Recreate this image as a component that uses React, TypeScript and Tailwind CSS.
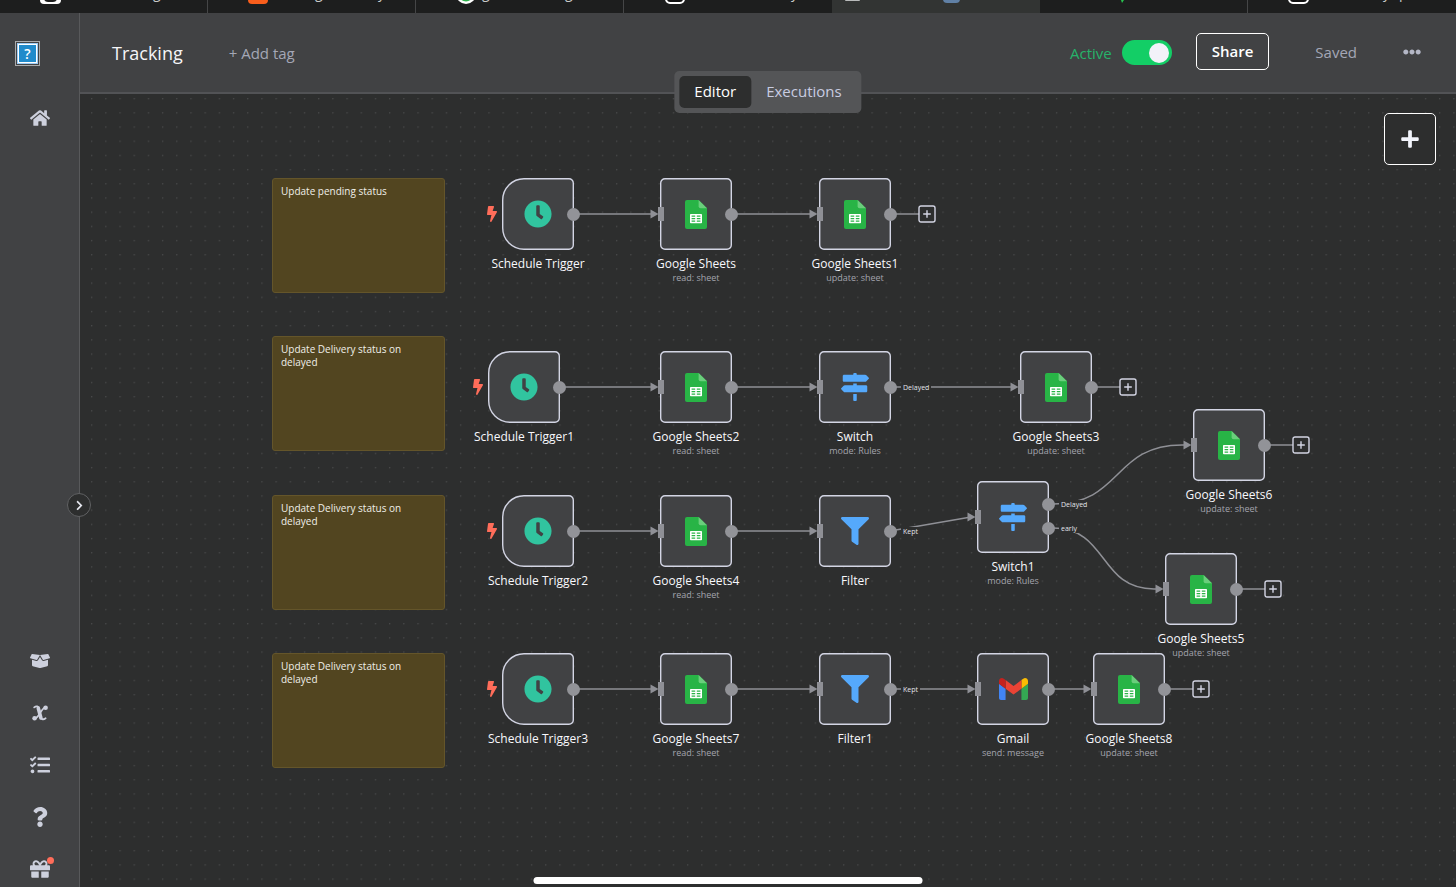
import { useState } from "react"
import type { ReactNode } from "react"
import {
  FaBolt,
  FaBoxOpen,
  FaChevronRight,
  FaClock,
  FaEllipsisH,
  FaFilter,
  FaGift,
  FaHome,
  FaMapSigns,
  FaPlus,
  FaQuestion,
  FaTasks,
} from "react-icons/fa"

type NodeKind = "schedule" | "sheets" | "switch" | "filter" | "gmail"

type Port = { dy: number; label?: string }

type WorkflowNode = {
  id: string
  kind: NodeKind
  x: number
  y: number
  subtitle?: string
  ports?: Port[]
  open?: boolean
}

const NODE_SIZE = 72
const MIDDLE = 36

const nodes: WorkflowNode[] = [
  { id: "Schedule Trigger", kind: "schedule", x: 422, y: 84 },
  { id: "Google Sheets", kind: "sheets", x: 580, y: 84, subtitle: "read: sheet" },
  { id: "Google Sheets1", kind: "sheets", x: 739, y: 84, subtitle: "update: sheet", open: true },
  { id: "Schedule Trigger1", kind: "schedule", x: 408, y: 257 },
  { id: "Google Sheets2", kind: "sheets", x: 580, y: 257, subtitle: "read: sheet" },
  {
    id: "Switch",
    kind: "switch",
    x: 739,
    y: 257,
    subtitle: "mode: Rules",
    ports: [{ dy: MIDDLE, label: "Delayed" }],
  },
  { id: "Google Sheets3", kind: "sheets", x: 940, y: 257, subtitle: "update: sheet", open: true },
  { id: "Schedule Trigger2", kind: "schedule", x: 422, y: 401 },
  { id: "Google Sheets4", kind: "sheets", x: 580, y: 401, subtitle: "read: sheet" },
  { id: "Filter", kind: "filter", x: 739, y: 401, ports: [{ dy: MIDDLE, label: "Kept" }] },
  {
    id: "Switch1",
    kind: "switch",
    x: 897,
    y: 387,
    subtitle: "mode: Rules",
    ports: [
      { dy: 23, label: "Delayed" },
      { dy: 47, label: "early" },
    ],
  },
  { id: "Google Sheets6", kind: "sheets", x: 1113, y: 315, subtitle: "update: sheet", open: true },
  { id: "Google Sheets5", kind: "sheets", x: 1085, y: 459, subtitle: "update: sheet", open: true },
  { id: "Schedule Trigger3", kind: "schedule", x: 422, y: 559 },
  { id: "Google Sheets7", kind: "sheets", x: 580, y: 559, subtitle: "read: sheet" },
  { id: "Filter1", kind: "filter", x: 739, y: 559, ports: [{ dy: MIDDLE, label: "Kept" }] },
  { id: "Gmail", kind: "gmail", x: 897, y: 559, subtitle: "send: message" },
  { id: "Google Sheets8", kind: "sheets", x: 1013, y: 559, subtitle: "update: sheet", open: true },
]

// [source, target, output index]
const edges: [string, string, number][] = [
  ["Schedule Trigger", "Google Sheets", 0],
  ["Google Sheets", "Google Sheets1", 0],
  ["Schedule Trigger1", "Google Sheets2", 0],
  ["Google Sheets2", "Switch", 0],
  ["Switch", "Google Sheets3", 0],
  ["Schedule Trigger2", "Google Sheets4", 0],
  ["Google Sheets4", "Filter", 0],
  ["Filter", "Switch1", 0],
  ["Switch1", "Google Sheets6", 0],
  ["Switch1", "Google Sheets5", 1],
  ["Schedule Trigger3", "Google Sheets7", 0],
  ["Google Sheets7", "Filter1", 0],
  ["Filter1", "Gmail", 0],
  ["Gmail", "Google Sheets8", 0],
]

const notes = [
  { text: "Update pending status", y: 84 },
  { text: "Update Delivery status on delayed", y: 242 },
  { text: "Update Delivery status on delayed", y: 401 },
  { text: "Update Delivery status on delayed", y: 559 },
]

function getPorts(node: WorkflowNode): Port[] {
  return node.ports ?? [{ dy: MIDDLE }]
}

function getEdgePath(sourceId: string, targetId: string, output: number) {
  const source = nodes.find((node) => node.id === sourceId)!
  const target = nodes.find((node) => node.id === targetId)!
  const x1 = source.x + 71
  const y1 = source.y + getPorts(source)[output].dy
  const x2 = target.x - 6
  const y2 = target.y + MIDDLE

  if (Math.abs(y2 - y1) < 20) {
    return `M${x1} ${y1}L${x2} ${y2}`
  }

  const bend = (x2 - x1) * 0.5
  return `M${x1} ${y1}h5C${x1 + bend + 5} ${y1} ${x2 - bend - 5} ${y2} ${x2 - 5} ${y2}h5`
}

function SheetsIcon() {
  return (
    <svg width="22" height="29" viewBox="0 0 22 29" aria-hidden="true">
      <path
        d="M2 0h11.6L22 8.2V27a2 2 0 0 1-2 2H2a2 2 0 0 1-2-2V2a2 2 0 0 1 2-2Z"
        fill="#28b446"
      />
      <path d="M13.6 0 22 8.2h-6.4a2 2 0 0 1-2-2Z" fill="#6ace7c" />
      <path
        fillRule="evenodd"
        d="M5.8 14h10.4a.8.8 0 0 1 .8.8v7.6a.8.8 0 0 1-.8.8H5.8a.8.8 0 0 1-.8-.8v-7.6a.8.8 0 0 1 .8-.8ZM6.6 15.5v1.3h3.6v-1.3ZM11.8 15.5v1.3h3.6v-1.3ZM6.6 18v1.3h3.6V18ZM11.8 18v1.3h3.6V18ZM6.6 20.5v1.3h3.6v-1.3ZM11.8 20.5v1.3h3.6v-1.3Z"
        fill="#fff"
      />
    </svg>
  )
}

function GmailIcon() {
  return (
    <svg width="29" height="22" viewBox="52 42 88 66" aria-hidden="true">
      <path fill="#4285f4" d="M58 108h14V74L52 59v43c0 3.32 2.69 6 6 6" />
      <path fill="#34a853" d="M120 108h14c3.32 0 6-2.69 6-6V59l-20 15" />
      <path fill="#fbbc04" d="M120 48v26l20-15v-8c0-7.42-8.47-11.65-14.4-7.2" />
      <path fill="#ea4335" d="M72 74V48l24 18 24-18v26L96 92" />
      <path fill="#c5221f" d="M52 51v8l20 15V48l-5.6-4.2c-5.94-4.45-14.4-.22-14.4 7.2" />
    </svg>
  )
}

function VariableIcon() {
  return (
    <svg width="18" height="18" viewBox="0 0 18 18" fill="none" aria-hidden="true">
      <path
        d="M3.2 3.4C5.400 1.600 7.600 2 8.100 5.200l1.200 7.200c.5 3 2.900 3.600 5.300 1.800"
        stroke="currentColor"
        strokeWidth="1.800"
        strokeLinecap="round"
      />
      <path d="M7.300 4.200 9.900 14" stroke="currentColor" strokeWidth="3.600" strokeLinecap="round" />
      <path
        d="M14.600 3.400c-2.200 0-3.400 2.400-5.300 5.400s-3.100 5.400-5.500 5.600"
        stroke="currentColor"
        strokeWidth="1.600"
      />
      <circle cx="14.600" cy="3.800" r="2.300" fill="currentColor" />
      <circle cx="3.600" cy="14.200" r="2.300" fill="currentColor" />
    </svg>
  )
}

function NodeIcon({ kind }: { kind: NodeKind }) {
  switch (kind) {
    case "schedule":
      return <FaClock size={28} className="text-[#31c49f]" />
    case "sheets":
      return <SheetsIcon />
    case "switch":
      return <FaMapSigns size={28} className="text-[#55a9fc]" />
    case "filter":
      return <FaFilter size={28} className="text-[#55a9fc]" />
    case "gmail":
      return <GmailIcon />
  }
}

function NodeCard({ node }: { node: WorkflowNode }) {
  const isTrigger = node.kind === "schedule"

  return (
    <div className="absolute size-[72px]" style={{ left: node.x, top: node.y }}>
      {isTrigger ? (
        <FaBolt size={16} className="absolute top-7 -left-[18px] text-[#ff6d5a]" />
      ) : null}
      <button
        type="button"
        aria-label={`Open ${node.id}`}
        className="relative flex size-full items-center justify-center"
      >
        <svg className="absolute inset-0" width="72" height="72" aria-hidden="true">
          <path
            d={
              isTrigger
                ? "M22 .7H67a4.3 4.3 0 0 1 4.3 4.3V67a4.3 4.3 0 0 1-4.3 4.3H22A21.3 21.3 0 0 1 .7 50V22A21.3 21.3 0 0 1 22 .7Z"
                : "M5 .7H67a4.3 4.3 0 0 1 4.3 4.3V67a4.3 4.3 0 0 1-4.3 4.3H5A4.3 4.3 0 0 1 .7 67V5A4.3 4.3 0 0 1 5 .7Z"
            }
            fill="#414244"
            stroke="#d3d5e4"
            strokeWidth="1.4"
          />
        </svg>
        <span className="relative">
          <NodeIcon kind={node.kind} />
        </span>
      </button>
      {isTrigger ? null : (
        <span className="absolute top-[29px] -left-0.5 h-3.5 w-1.5 bg-[#8f9096]" />
      )}
      {getPorts(node).map((port) => (
        <div
          key={port.dy}
          className="absolute left-[65px] flex h-[13px] items-center"
          style={{ top: port.dy - 6 }}
        >
          <span className="size-[13px] rounded-full bg-[#929398]" />
          {port.label ? (
            <span className="ml-1 bg-[#2d2e2e] px-0.5 text-[7px] leading-[9px] text-[#e4e4ea]">
              {port.label}
            </span>
          ) : null}
        </div>
      ))}
      {node.open ? (
        <button
          type="button"
          aria-label={`Add node after ${node.id}`}
          className="absolute top-[27px] left-[99px] text-[#d3d5e4]"
        >
          <svg width="18" height="18" viewBox="0 0 18 18" aria-hidden="true">
            <rect
              x="1"
              y="1"
              width="16"
              height="16"
              rx="2"
              fill="#2d2e2e"
              stroke="currentColor"
              strokeWidth="1.4"
            />
            <path d="M9 5.2v7.6M5.2 9h7.6" stroke="currentColor" strokeWidth="1.4" />
          </svg>
        </button>
      ) : null}
      <div className="absolute top-full left-1/2 -translate-x-1/2 pt-1.5 text-center whitespace-nowrap">
        <p className="text-xs leading-4 font-medium text-[#f8f8fc]">{node.id}</p>
        {node.subtitle ? (
          <p className="text-[9px] leading-[11px] text-[#a3a4ad]">{node.subtitle}</p>
        ) : null}
      </div>
    </div>
  )
}

function Edges() {
  return (
    <svg className="pointer-events-none absolute inset-0 size-full" aria-hidden="true">
      <defs>
        <pattern id="dots" x="11" y="4" width="14.19" height="14.19" patternUnits="userSpaceOnUse">
          <circle cx=".7" cy=".7" r=".65" fill="#505152" />
        </pattern>
      </defs>
      <rect width="100%" height="100%" fill="url(#dots)" />
      <g fill="none" stroke="#8f9096" strokeWidth="1.5">
        {edges.map(([source, target, output]) => (
          <path key={`${source}-${target}`} d={getEdgePath(source, target, output)} />
        ))}
        {nodes
          .filter((node) => node.open)
          .map((node) => (
            <path key={node.id} d={`M${node.x + NODE_SIZE} ${node.y + MIDDLE}h28`} />
          ))}
      </g>
      {edges.map(([source, target]) => {
        const node = nodes.find((item) => item.id === target)!
        return (
          <path
            key={`${source}-${target}`}
            d={`M${node.x - 9.5} ${node.y + MIDDLE - 4.6}l8 4.6-8 4.6Z`}
            fill="#8f9096"
          />
        )
      })}
    </svg>
  )
}

function Canvas() {
  return (
    <section aria-label="Workflow canvas" className="relative flex-1 overflow-hidden bg-[#2d2e2e]">
      <Edges />
      {notes.map((note) => (
        <p
          key={note.y}
          className="absolute left-[192px] h-[115px] w-[173px] rounded-[3px] border border-[#64552a] bg-[#524520] px-2 py-1.5 text-[10px] leading-[13px] text-[#f0efe9]"
          style={{ top: note.y }}
        >
          {note.text}
        </p>
      ))}
      {nodes.map((node) => (
        <NodeCard key={node.id} node={node} />
      ))}
      <button
        type="button"
        aria-label="Add node"
        className="absolute top-[19px] right-5 flex size-[52px] items-center justify-center rounded-[5px] border border-white bg-[#2d2e2e] text-[#f2f4fb]"
      >
        <FaPlus size={20} />
      </button>
    </section>
  )
}

function SidebarButton({ label, children }: { label: string; children: ReactNode }) {
  return (
    <button
      type="button"
      aria-label={label}
      className="relative flex size-5 items-center justify-center text-[#cdd0dd]"
    >
      {children}
    </button>
  )
}

function Sidebar() {
  return (
    <aside className="relative flex w-20 shrink-0 flex-col items-center border-r border-[#58595b] bg-[#414244] pt-7 pb-2">
      <a
        href="#home"
        aria-label="Logo"
        className="mb-[42px] ml-[15px] flex size-[25px] items-center justify-center self-start border border-[#a9aaab]"
      >
        <span className="flex size-[21px] items-center justify-center border border-[#9ccbf3] bg-white p-px">
          <span className="flex size-full items-center justify-center bg-[#218bcb] text-sm leading-none font-semibold text-white">
            ?
          </span>
        </span>
      </a>
      <SidebarButton label="Home">
        <FaHome size={20} />
      </SidebarButton>
      <div className="mt-auto flex flex-col gap-8">
        <SidebarButton label="Templates">
          <FaBoxOpen size={20} />
        </SidebarButton>
        <SidebarButton label="Variables">
          <VariableIcon />
        </SidebarButton>
        <SidebarButton label="All executions">
          <FaTasks size={20} />
        </SidebarButton>
        <SidebarButton label="Help">
          <FaQuestion size={20} />
        </SidebarButton>
        <SidebarButton label="What's new">
          <FaGift size={20} />
          <span className="absolute -top-0.5 -right-1 size-[7px] rounded-full bg-[#ff6d5a]" />
        </SidebarButton>
      </div>
      <button
        type="button"
        aria-label="Expand menu"
        className="absolute top-[480px] -right-3 z-10 flex size-6 items-center justify-center rounded-full border border-[#606163] bg-[#2d2e2e] text-[#e6e7ef]"
      >
        <FaChevronRight size={11} />
      </button>
    </aside>
  )
}

function Header() {
  const [active, setActive] = useState(true)

  return (
    <header className="relative z-10 flex h-[81px] shrink-0 items-center border-b-2 border-[#525356] bg-[#414244] pr-[35px] pl-8 text-[15px] leading-5">
      <h1 className="text-lg leading-6 text-[#f5f5f8]">Tracking</h1>
      <button type="button" className="ml-[46px] font-medium text-[#a4a7b6]">
        + Add tag
      </button>
      <label htmlFor="active" className="ml-auto font-medium text-[#26b36a]">
        Active
      </label>
      <input
        id="active"
        type="checkbox"
        role="switch"
        checked={active}
        onChange={(event) => setActive(event.target.checked)}
        className="ml-2.5 flex h-[25px] w-[50px] shrink-0 appearance-none items-center rounded-full bg-[#77787c] px-[3px] before:size-5 before:rounded-full before:bg-[#f2f2f9] before:content-[''] checked:justify-end checked:bg-[#13ce66]"
      />
      <div className="ml-6 flex items-center pb-0.5">
        <button
          type="button"
          className="rounded-[5px] border border-white px-[15px] pt-[7px] pb-2 font-semibold text-white"
        >
          Share
        </button>
        <span className="ml-[46px] font-medium text-[#a4a7b6]">Saved</span>
        <button type="button" aria-label="Workflow menu" className="ml-[46px] text-[#b4b7c6]">
          <FaEllipsisH size={18} />
        </button>
      </div>
      <nav
        aria-label="Workflow views"
        className="absolute top-[58px] left-1/2 flex -translate-x-1/2 rounded-[5px] bg-[#545557] p-[5px] font-medium"
      >
        <a href="#editor" className="rounded-[5px] bg-[#2d2e2e] px-[15px] pt-[5px] pb-[7px] text-white">
          Editor
        </a>
        <a href="#executions" className="px-[15px] pt-[5px] pb-[7px] text-[#c9cce1]">
          Executions
        </a>
      </nav>
    </header>
  )
}

function BrowserTabs() {
  return (
    <div className="relative flex h-[13px] shrink-0 overflow-hidden bg-[#1d1e1e]">
      {[0, 1, 2, 3, 4, 5, 6].map((tab) => (
        <div
          key={tab}
          className={
            tab === 4
              ? "w-52 shrink-0 bg-[#323433]"
              : "w-52 shrink-0 border-r border-[#454647] nth-4:border-r-0 nth-7:border-r-0"
          }
        />
      ))}
      <svg className="absolute inset-0 size-full" aria-hidden="true">
        <rect x="40" y="-16" width="21" height="20" rx="4" fill="#fff" />
        <rect x="44" y="-14" width="13" height="16" rx="4" fill="#1d1e1e" />
        <rect x="248" y="-16" width="20" height="20" rx="4" fill="#f95e1c" />
        <circle cx="466" cy="-6" r="10" fill="#fff" />
        <circle cx="466" cy="-6" r="7.5" fill="#2eb24c" />
        <rect x="666" y="-15" width="18" height="18" rx="4" fill="#111" stroke="#fff" strokeWidth="2" />
        <rect x="845" y="-10" width="15" height="11" rx="1" fill="#b9bbbb" />
        <rect x="943" y="-16" width="17" height="19" rx="4" fill="#6080a5" />
        <path d="M1121 0h3l-2 3Z" fill="#28c24f" />
        <rect x="1289" y="-15" width="19" height="18" rx="4" fill="#111" stroke="#fff" strokeWidth="2" />
        <g fill="#c9caca" fontSize="14">
          <text x="153" y="-2">g</text>
          <text x="315" y="-2">g</text>
          <text x="378" y="-2">y</text>
          <text x="482" y="-2">g</text>
          <text x="565" y="-2">g</text>
          <text x="791" y="-2">y</text>
          <text x="1383" y="-2">y</text>
          <text x="1399" y="-2">p</text>
        </g>
      </svg>
    </div>
  )
}

export default function App() {
  return (
    <div className="relative flex min-h-screen flex-col bg-[#2d2e2e] font-['Open_Sans',sans-serif]">
      <BrowserTabs />
      <div className="flex flex-1">
        <Sidebar />
        <main className="flex min-w-0 flex-1 flex-col">
          <Header />
          <Canvas />
        </main>
      </div>
      <div className="absolute bottom-[3px] left-1/2 h-[7px] w-[389px] -translate-x-1/2 rounded-full bg-white" />
    </div>
  )
}
